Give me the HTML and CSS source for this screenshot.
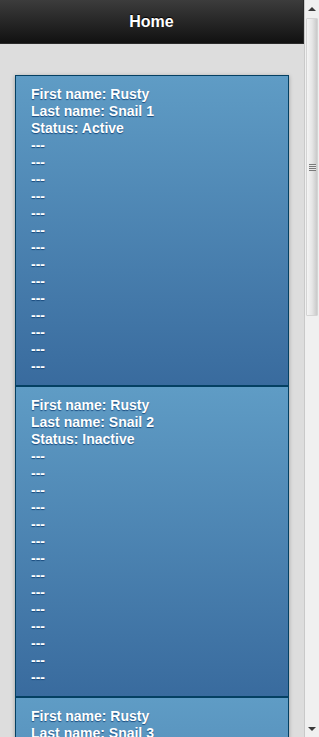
FILE: index.html
```html
<!DOCTYPE html>
<html lang="en">

<head>
    <meta charset="UTF-8">
    <meta name="viewport" content="width=device-width, initial-scale=1.0">
    <title>Home</title>
    <link rel="stylesheet" href="styles.css">
</head>

<body>
    <div class="page">
        <div class="header">
            <h1 class="title">Home</h1>
        </div>
        <div class="content">
            <ul class="listview"></ul>
        </div>
    </div>

    <div class="scrollbar">
        <div class="scroll-btn"><span class="arrow arrow-up"></span></div>
        <div class="scroll-track">
            <div class="scroll-thumb">
                <span class="grip"></span>
            </div>
        </div>
        <div class="scroll-btn"><span class="arrow arrow-down"></span></div>
    </div>

    <script>
        // snails to show
        const snails = [
            { first: "Rusty", last: "Snail 1", status: "Active" },
            { first: "Rusty", last: "Snail 2", status: "Inactive" },
            { first: "Rusty", last: "Snail 3", status: "Active" }
        ];

        function renderList() {
            const list = document.querySelector('.listview');
            list.innerHTML = snails.map(s => {
                const dashes = new Array(14).fill('<div>---</div>').join('');
                return `
                    <li class="list-item">
                        <div>First name: ${s.first}</div>
                        <div>Last name: ${s.last}</div>
                        <div>Status: ${s.status}</div>
                        ${dashes}
                    </li>
                `;
            }).join('');
        }
        renderList();
    </script>
</body>

</html>
```

FILE: styles.css
```css
html,
body {
    margin: 0;
    padding: 0;
    height: 737px;
    overflow: hidden;
}

body {
    display: flex;
    font-family: "Liberation Sans", Arial, Helvetica, sans-serif;
    background: #dddddd;
}

.page {
    flex: 1;
    min-width: 0;
    height: 737px;
    overflow: hidden;
    background: #dddddd;
}

.header {
    height: 43px;
    background: linear-gradient(to bottom, #3c3c3c, #111111);
    border-bottom: 1px solid #2a2a2a;
    border-right: 1px solid #2a2a2a;
    display: flex;
    align-items: center;
    justify-content: center;
}

.title {
    margin: 0;
    font-size: 16px;
    font-weight: bold;
    color: #ffffff;
    text-shadow: 0 -1px 1px #000000;
}

.content {
    padding: 31px 15px 15px;
}

.listview {
    list-style: none;
    margin: 0;
    padding: 0;
    box-shadow: 0 1px 4px rgba(0, 0, 0, 0.3);
}

.list-item {
    padding: 10px 15px;
    border: 1px solid #044062;
    background: linear-gradient(to bottom, #5f9cc5, #396b9e);
    color: #ffffff;
    font-size: 14px;
    font-weight: bold;
    line-height: 17px;
    text-shadow: 0 1px 1px #194b7e;
}

/* fake classic scrollbar */
.scrollbar {
    width: 14px;
    height: 737px;
    display: flex;
    flex-direction: column;
    background: #f0f0f0;
    border-left: 1px solid #c9c9c9;
}

.scroll-btn {
    height: 17px;
    display: flex;
    align-items: center;
    justify-content: center;
    background: #f0f0f0;
}

.arrow {
    width: 0;
    height: 0;
    border-left: 4px solid transparent;
    border-right: 4px solid transparent;
}

.arrow-up {
    border-bottom: 4px solid #3a3a3a;
}

.arrow-down {
    border-top: 4px solid #3a3a3a;
}

.scroll-track {
    flex: 1;
    background: #f0f0f0;
    padding-top: 1px;
}

.scroll-thumb {
    height: 296px;
    margin: 0 1px;
    border: 1px solid #d4d4d4;
    border-radius: 1px;
    background: linear-gradient(to right, #f4f4f4, #e6e6e6 50%, #c9c9c9);
    display: flex;
    align-items: center;
    justify-content: center;
}

.grip {
    width: 7px;
    height: 7px;
    background: repeating-linear-gradient(to bottom, #7a7a7a 0, #7a7a7a 1px, #e8e8e8 1px, #e8e8e8 2px);
}
```
